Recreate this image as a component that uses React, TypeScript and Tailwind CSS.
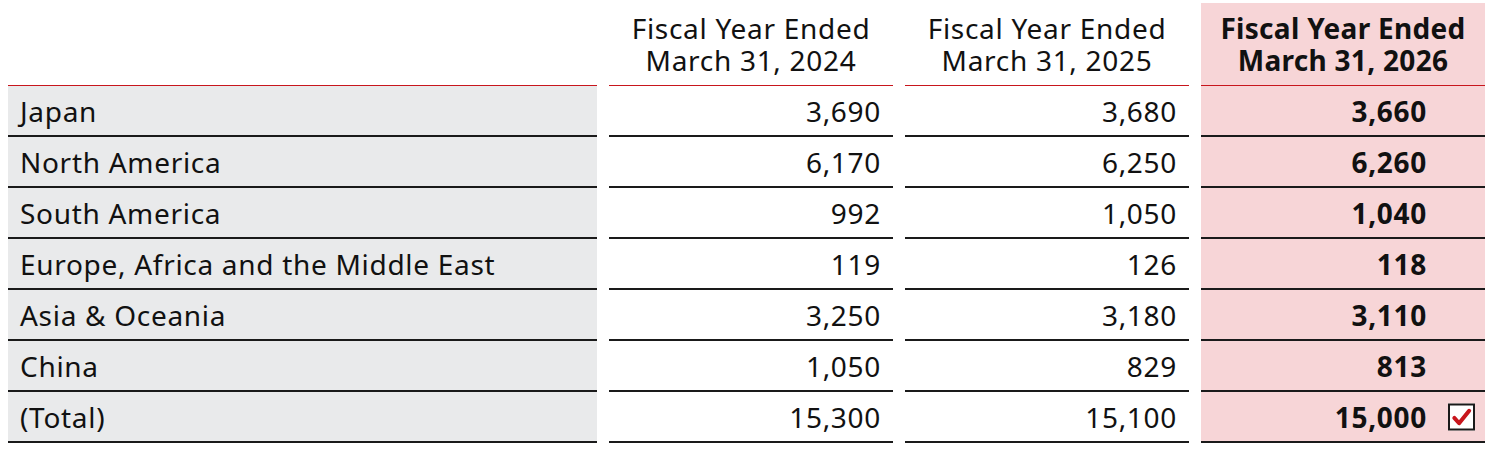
import React from "react";

const rows = [
  { label: "Japan", a: "3,690", b: "3,680", c: "3,660" },
  { label: "North America", a: "6,170", b: "6,250", c: "6,260" },
  { label: "South America", a: "992", b: "1,050", c: "1,040" },
  { label: "Europe, Africa and the Middle East", a: "119", b: "126", c: "118" },
  { label: "Asia & Oceania", a: "3,250", b: "3,180", c: "3,110" },
  { label: "China", a: "1,050", b: "829", c: "813" },
  { label: "(Total)", a: "15,300", b: "15,100", c: "15,000", total: true },
];

const CheckBox = () => (
  <span className="absolute right-[10px] top-1/2 -translate-y-1/2 w-[27px] h-[27px] border-2 border-[#1a1a1a] bg-white flex items-center justify-center">
    <svg viewBox="0 0 24 24" className="w-[23px] h-[23px]">
      <path d="M4.5 13 L9.5 18.5 L20 5.5" fill="none" stroke="#c8161d" strokeWidth="4.2" strokeLinecap="round" strokeLinejoin="round" />
    </svg>
  </span>
);

const App = () => {
  return (
    <div className="bg-white w-[1491px] h-[450px] text-[#111] font-['Noto_Sans',sans-serif] text-[28px] tracking-[0.7px] leading-none">
      <div className="grid grid-cols-[589px_284px_284px_284px] gap-x-3 ml-2">
        {/* header */}
        <div className="h-[86px] border-b border-[#c8161d]" />
        <div className="h-[86px] border-b border-[#c8161d] flex flex-col items-center justify-center pt-[2px] leading-[32px]">
          <span>Fiscal Year Ended</span>
          <span>March 31, 2024</span>
        </div>
        <div className="h-[86px] border-b border-[#c8161d] flex flex-col items-center justify-center pt-[2px] leading-[32px]">
          <span>Fiscal Year Ended</span>
          <span>March 31, 2025</span>
        </div>
        <div className="h-[83px] mt-[3px] border-b border-[#c8161d] bg-[#f7d5d7] flex flex-col items-center justify-center leading-[32px] font-bold tracking-[0.3px]">
          <span>Fiscal Year Ended</span>
          <span>March 31, 2026</span>
        </div>

        {rows.map((r) => (
          <React.Fragment key={r.label}>
            <div className="h-[51px] border-b-2 border-[#1a1a1a] bg-[#e9eaeb] flex items-center pl-3">
              {r.label}
            </div>
            <div className="h-[51px] border-b-2 border-[#1a1a1a] flex items-center justify-end pr-3">
              {r.a}
            </div>
            <div className="h-[51px] border-b-2 border-[#1a1a1a] flex items-center justify-end pr-3">
              {r.b}
            </div>
            <div className="relative h-[51px] border-b-2 border-[#1a1a1a] bg-[#f7d5d7] flex items-center justify-end pr-[58px] font-bold">
              {r.c}
              {r.total && <CheckBox />}
            </div>
          </React.Fragment>
        ))}
      </div>
    </div>
  );
};

export default App;
